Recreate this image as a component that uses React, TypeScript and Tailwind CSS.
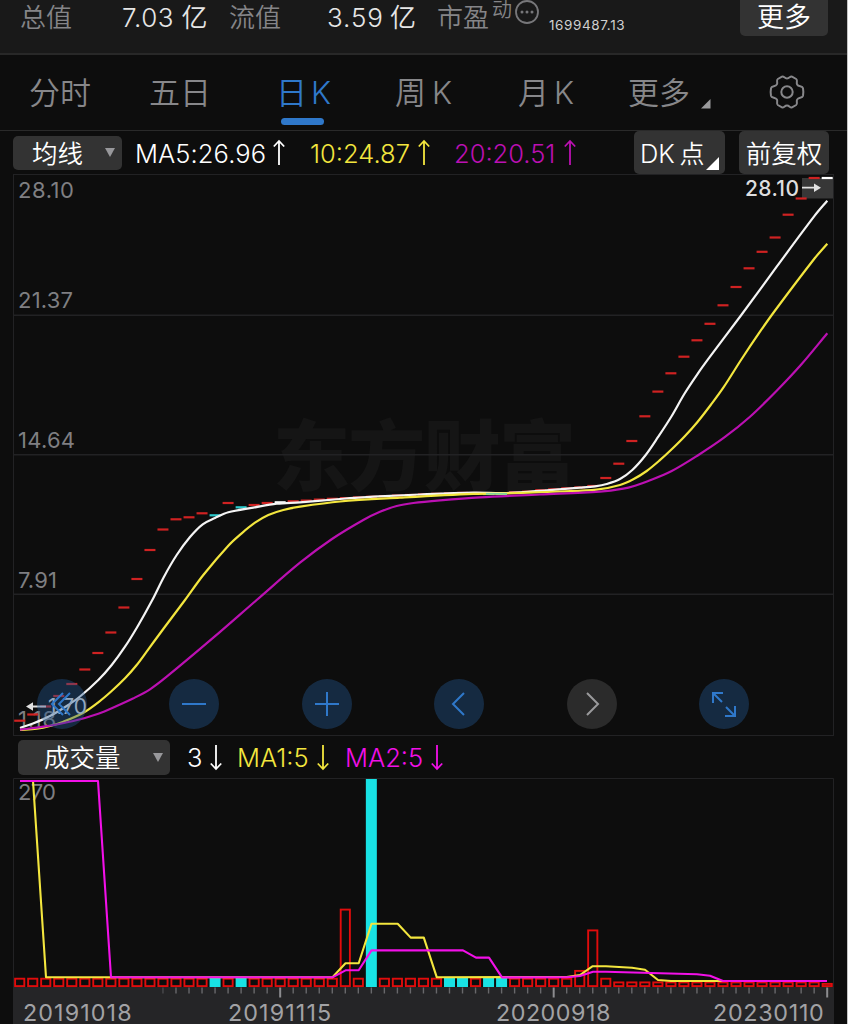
import React from "react";

const STEP = 13.024;
const X0 = 19.7;
const cx = (i: number) => X0 + STEP * i;

const prices: number[] = [
  720.7, 714.5, 706.5, 696, 684, 669.5, 653, 632.5, 607.5, 579, 550, 529.5, 519.3, 517.3, 513.3, 515.3, 503, 507.3,
  505, 503, 502.3, 501.3, 500.6, 499.6, 498.8, 498.1, 497.4, 496.8, 496.2, 495.6, 495, 494.4, 493.8, 493.3, 492.9, 493,
  494, 494, 492.3, 491.6, 490.2, 489.3, 488.3, 487.4, 486, 478, 463.7, 441, 416.3, 391.6, 373.3, 356.7, 340.3, 323.8,
  305.3, 287, 268.3, 251.8, 237.5, 214.7, 198.5, 178, 178,
];
const fallingPrice = [15, 17, 36, 37];
const fallingVolume = [15, 17, 27, 33, 34, 36, 37];

const ma5 =
  "20,728 33,723.5 50,716 66.7,706 80,696.5 98.3,680 111.7,665 125,646.7 138,625.7 152.3,600 164,576.7 176.7,555 190,537 202.7,524.3 215,518 228.3,512.3 253.3,507.7 276.7,503.7 300,502.3 340,499 373.3,496.7 420,494.5 473.3,492.7 506.7,493 546.7,490.3 580,487.7 595,486.3 606.7,484 620,479 632.3,470 645.7,455 658.3,436.7 671.7,416 684.3,394 697.3,374.3 710,356.7 741.3,315 776.7,266.7 814.7,215.7 827.3,200.7";
const ma10 =
  "20,730 36.7,728.7 50,726 63.3,721.7 83.3,712.7 98.3,702.3 111.7,691 125,678.3 136.7,665 148.3,649.3 164,628 185,600 203.3,575 228.3,545.7 241.7,533.3 255,522.7 268.3,515 283.3,510 300,506.7 340,501.5 400,497.7 473.3,493.9 506.7,493.4 560,491.5 596.7,489.7 620,485 633.3,479.3 646.7,471 659.3,460.7 671.7,449.3 685,436 697.7,421.7 710.7,405 723.3,387.7 741,360 759.3,332.7 774.7,311 814.7,258.3 827.3,243.7";
const ma20 =
  "20,729.7 43.3,726.7 73.3,721 98.3,713.7 116.7,706 133,698.5 150,689.3 166.7,676.7 213.3,637.7 256.7,600 300,562.7 332,539 363.3,520 380,511.8 396.7,506 413.3,503 440,500.3 480,497.3 540,494.5 600,491.7 623.3,488.7 635,485.7 648.3,481 671.7,471 697.3,455.7 724,437.7 750,416.7 776.7,390.7 801.7,364 827.3,333.3";

const volMa1 =
  "33,781 46,977.3 332.5,977.3 345.5,963.3 358.7,963.3 371.5,923.7 397.7,923.7 410.7,937.6 423.8,937.6 436.8,977.3 566.6,977 580,975 592.7,966.2 606,966.2 632,967.7 645,969.7 658,980 671,981 827,981";
const volMa2 =
  "20,781 98,781 111,977.3 332.5,977.3 345.5,970.3 358.7,970.3 371.5,950.4 463,950.4 476,957.6 489,957.6 502,977.4 567,977.2 580,976 593,971.7 606,971.7 697,974.2 710,975.7 723,981 827,981";

// Catmull-Rom spline through the points, written as cubic segments.
function smooth(points: string) {
  const p = points.split(" ").map((s) => s.split(",").map(Number));
  let d = `M${p[0][0]} ${p[0][1]}`;
  for (let i = 0; i < p.length - 1; i++) {
    const a = p[Math.max(i - 1, 0)];
    const b = p[i];
    const c = p[i + 1];
    const e = p[Math.min(i + 2, p.length - 1)];
    const w = c[0] - b[0];
    const mb = (c[1] - a[1]) / (c[0] - a[0]);
    const mc = (e[1] - b[1]) / (e[0] - b[0]);
    d += `C${b[0] + w / 3} ${b[1] + (mb * w) / 3} ${c[0] - w / 3} ${c[1] - (mc * w) / 3} ${c[0]} ${c[1]}`;
  }
  return d;
}

function volumeTop(i: number) {
  if (i === 25) return 908.7;
  if (i === 27) return 779;
  if (i === 43) return 970;
  if (i === 44) return 929.5;
  if (i === 62) return 983;
  return i > 45 ? 981.5 : 977.8;
}

function Arrow({ down = false, color, width }: { down?: boolean; color: string; width: string }) {
  return (
    <span className={`${width} shrink-0`}>
      <svg width="14" height="28" viewBox="0 0 14 28" fill="none" stroke={color} strokeWidth="1.8">
        <path d={down ? "M7 1V25M1.8 19.5L7 25L12.2 19.5" : "M7 26V2M1.8 7.5L7 2L12.2 7.5"} />
      </svg>
    </span>
  );
}

function RoundButton({ children, gray = false }: { children: React.ReactNode; gray?: boolean }) {
  return (
    <button
      className={`flex size-[50px] items-center justify-center rounded-full ${
        gray ? "bg-[#2b2b2b] text-[#9a9a9c]" : "bg-[rgba(36,88,146,0.4)] text-[#2f78ca]"
      }`}
    >
      <svg width="50" height="50" viewBox="0 0 50 50" fill="none" stroke="currentColor" strokeWidth="2">
        {children}
      </svg>
    </button>
  );
}

function PriceChart() {
  return (
    <svg className="block" width="821" height="562" viewBox="13 174 821 562" fill="none">
      <rect x="13.5" y="174.5" width="820" height="561" stroke="#222224" />
      <text
        x="273"
        y="485"
        fontSize="77"
        fontWeight="900"
        fill="#151515"
        textLength="303"
        className="font-['Noto_Sans_CJK_SC',sans-serif]"
      >
        东方财富
      </text>
      {[315.3, 454.7, 594.3].map((y) => (
        <path key={y} d={`M14 ${y}H833`} stroke="#222224" strokeWidth="1.6" />
      ))}
      <g fill="#7f7f82" fontSize="22" className="font-[Inter,sans-serif]">
        <text x="18" y="198" textLength="56">28.10</text>
        <text x="18" y="307.5" textLength="55">21.37</text>
        <text x="18" y="447.5" textLength="57">14.64</text>
        <text x="18" y="587.5" textLength="39">7.91</text>
        <text x="18" y="727" textLength="38">1.18</text>
      </g>
      <rect x="802" y="178" width="31" height="20.5" fill="#373737" />
      {prices.map((y, i) => (
        <rect
          key={i}
          x={cx(i) - 5.5}
          y={y - 1.1}
          width="11"
          height="2.2"
          fill={i === 62 || i === 20 ? "#fff" : fallingPrice.includes(i) ? "#2bc9cb" : "#cf2222"}
        />
      ))}
      <g strokeWidth="2.2" strokeLinejoin="round">
        <path d={smooth(ma5)} stroke="#f4f4f4" />
        <path d={smooth(ma10)} stroke="#f3e63e" />
        <path d={smooth(ma20)} stroke="#bb10b2" />
      </g>
      <rect x="486" y="493" width="21" height="1.6" fill="#7fd69a" />
      <g className="font-[Inter,sans-serif]" fill="#dededf" fontSize="21" fontWeight="500">
        <text x="745" y="195.5" textLength="54">28.10</text>
        <text x="48" y="714" textLength="39" fontWeight="400">1.70</text>
      </g>
      <path d="M802 187.7H816M30 706.5H46" stroke="#e0e0e0" strokeWidth="1.8" />
      <path d="M814 183.5L821 187.7L814 191.9ZM33 702.3L26 706.5L33 710.7Z" fill="#e0e0e0" />
    </svg>
  );
}

function VolumeChart() {
  return (
    <svg className="block" width="821" height="220" viewBox="13 778 821 220" fill="none">
      <path d="M13.5 987V778.5H833.5V987" stroke="#222224" />
      <rect x="13" y="987" width="821" height="11" fill="#252527" />
      <text x="18" y="800" fontSize="22" fill="#7f7f82" textLength="38" className="font-[Inter,sans-serif]">
        270
      </text>
      {prices.map((_, i) => {
        const top = volumeTop(i);
        return fallingVolume.includes(i) ? (
          <rect key={i} x={cx(i) - 5.5} y={top} width="11" height={987 - top} fill="#18e2e4" />
        ) : (
          <rect
            key={i}
            x={cx(i) - 4.6}
            y={top + 0.9}
            width="9.2"
            height={987 - top - 1.8}
            stroke="#e00c0c"
            strokeWidth="1.9"
          />
        );
      })}
      {prices.map((_, i) =>
        i < 11 ? null : (
          <path
            key={i}
            d={`M${cx(i)} 987.5V${i === 20 || i === 41 || i === 62 ? 997.5 : 993.5}`}
            stroke={i === 20 || i === 41 || i === 62 ? "#8c8c8f" : i === 11 ? "#4a4a4c" : "#68686b"}
            strokeWidth={i === 20 || i === 41 || i === 62 ? 2 : 1.4}
          />
        ),
      )}
      <g strokeWidth="2.1" strokeLinejoin="round">
        <polyline points={volMa1} stroke="#f3e63e" />
        <polyline points={volMa2} stroke="#f210e8" />
      </g>
    </svg>
  );
}

export default function App() {
  return (
    <div className="flex h-[1024px] w-[848px] flex-col overflow-hidden border-r border-[#c4c4c4] bg-[#0d0d0d] font-[Inter,'Noto_Sans_CJK_SC',sans-serif] whitespace-nowrap">
      <header className="flex h-[55px] shrink-0 items-start border-b-2 border-[#282828] bg-[#191919] pl-5 text-[26px] leading-[36px] text-[#e6e6e6]">
        <span className="w-[102px] font-[350] text-[#858588]">总值</span>
        <span className="w-[59.5px] font-[350] tracking-[0.6px]">7.03</span>
        <span className="w-[47.5px] font-[350]">亿</span>
        <span className="w-[98px] font-[350] text-[#858588]">流值</span>
        <span className="w-[63px] font-[350] tracking-[0.9px]">3.59</span>
        <span className="w-[47px] font-[350]">亿</span>
        <span className="w-[55px] font-[350] text-[#858588]">市盈</span>
        <span className="w-[23px] text-[20px] leading-[20px] font-[350] text-[#858588]">动</span>
        <svg className="shrink-0" width="24" height="25" viewBox="0 0 24 25" fill="#77777a">
          <circle cx="12" cy="12" r="11" fill="none" stroke="#77777a" strokeWidth="1.8" />
          <circle cx="7" cy="12" r="1.5" />
          <circle cx="12" cy="12" r="1.5" />
          <circle cx="17" cy="12" r="1.5" />
        </svg>
        <span className="ml-[10px] w-[191px] pt-[7px] text-[13.5px] tracking-[0.6px] text-[#d0d0d0]">1699487.13</span>
        <button className="h-9 w-[88px] rounded-b-[5px] bg-[#333333] text-[27px] leading-[32px] font-[350] text-white">
          更多
        </button>
      </header>

      <nav className="flex h-[76px] shrink-0 items-start border-b border-[#2a2a2a] pt-[17px] pl-[29px] text-[31px] leading-[42px] font-[350] text-[#87878a]">
        <span className="w-[120px]">分时</span>
        <span className="w-[127px]">五日</span>
        <div className="flex w-[119px] flex-col text-[#2f78ca]">
          <span className="flex gap-[4px]">
            <span className="w-[31px]">日</span>
            <span className="font-light">K</span>
          </span>
          <i className="mt-1 ml-[5px] h-[7px] w-[43px] rounded-full bg-[#2f78ca]" />
        </div>
        <span className="flex w-[123px]">
          <span className="w-[37px]">周</span>
          <span className="font-light">K</span>
        </span>
        <span className="flex w-[110px]">
          <span className="w-[36px]">月</span>
          <span className="font-light">K</span>
        </span>
        <span className="w-[73px]">更多</span>
        <svg className="mt-[27px] mr-[58px] shrink-0" width="10" height="10" viewBox="0 0 10 10">
          <path d="M9.5 0V9.5H0Z" fill="#9a9a9c" />
        </svg>
        <svg
          width="36"
          height="36"
          viewBox="0 0 36 36"
          fill="none"
          stroke="#87878a"
          strokeWidth="2"
          className="mt-[2px] shrink-0"
        >
          <path
            strokeLinejoin="round"
            d="M13 2.6C15 1.8 15.4 4.5 18 4.5S21 1.8 23 2.6L27.2 5C29 6.2 27 8.4 28.1 10.4C29.5 13 33.4 11.5 34 14.3C34.4 16.5 34.4 19.5 34 21.7C33.4 24.5 29.5 23 28.1 25.6C27 27.6 29 29.8 27.2 31L23 33.4C21 34.2 20.6 31.5 18 31.5S15 34.2 13 33.4L8.8 31C7 29.8 9 27.6 7.9 25.6C6.5 23 2.6 24.5 2 21.7C1.6 19.5 1.6 16.5 2 14.3C2.6 11.5 6.5 13 7.9 10.4C9 8.4 7 6.2 8.8 5Z"
          />
          <circle cx="18" cy="18" r="5.7" />
        </svg>
      </nav>

      <div className="flex h-[43px] shrink-0 items-center pl-[13px] text-[25.5px] leading-[34px] font-[350] text-[#bb10b2]">
        <button className="mr-[13px] flex h-[34px] w-[109px] items-center rounded-[5px] bg-[#333333] pl-[19px] text-white">
          <span className="w-[73px] pt-[2px] text-left">均线</span>
          <svg width="10" height="9" viewBox="0 0 10 9">
            <path d="M0 0H10L5 9Z" fill="#98989b" />
          </svg>
        </button>
        <span className="w-[137px] pt-[2px] tracking-[0.1px] text-white">MA5:26.96</span>
        <Arrow color="#ffffff" width="w-[38px]" />
        <span className="w-[107px] pt-[2px] text-[#f3e63e]">10:24.87</span>
        <Arrow color="#f3e63e" width="w-[37px]" />
        <span className="w-[109px] pt-[2px]">20:20.51</span>
        <Arrow color="#bb10b2" width="w-[71px]" />
        <button className="mr-[14px] flex h-[43px] w-[91px] shrink-0 items-center rounded-[5px] bg-[#333333] pl-[6px] text-white">
          <span className="w-[38px] pt-[2px] text-left">DK</span>
          <span className="w-[28px] pt-[2px] text-[25px]">点</span>
          <svg className="mt-[22px] shrink-0" width="13" height="13" viewBox="0 0 13 13">
            <path d="M13 0V13H0Z" fill="#fff" />
          </svg>
        </button>
        <button className="h-[43px] w-[90px] shrink-0 rounded-[5px] bg-[#333333] pt-[2px] text-white">前复权</button>
      </div>

      <section className="relative ml-[13px] h-[562px] w-[821px] shrink-0">
        <PriceChart />
        <div className="absolute top-[504.5px] left-[24px] flex gap-[82.4px]">
          <RoundButton>
            <path d="M26 14L15 25L26 36M33 14L22 25L33 36" />
          </RoundButton>
          <RoundButton>
            <path d="M13 25H37" />
          </RoundButton>
          <RoundButton>
            <path d="M13 25H37M25 13V37" />
          </RoundButton>
          <RoundButton>
            <path d="M30 14L19 25L30 36" />
          </RoundButton>
          <RoundButton gray>
            <path d="M20 14L31 25L20 36" />
          </RoundButton>
          <RoundButton>
            <path d="M14 24V14H24M14 14L23 23M27 28L36 37M26 37H36V27" />
          </RoundButton>
        </div>
      </section>

      <div className="flex h-[42px] shrink-0 items-center pt-[1px] pl-[18px] text-[25.5px] leading-[34px] font-[350] text-[#f210e8]">
        <button className="mr-[17px] flex h-[35px] w-[152px] items-center rounded-[5px] bg-[#333333] pl-[26px] text-white">
          <span className="w-[109px] pt-[1px] text-left">成交量</span>
          <svg width="10" height="9" viewBox="0 0 10 9">
            <path d="M0 0H10L5 9Z" fill="#98989b" />
          </svg>
        </button>
        <span className="w-[22px] pt-[1px] text-white">3</span>
        <Arrow down color="#ffffff" width="w-[28px]" />
        <span className="w-[79px] pt-[1px] text-[#f3e63e]">MA1:5</span>
        <Arrow down color="#f3e63e" width="w-[29px]" />
        <span className="w-[85px] pt-[1px]">MA2:5</span>
        <Arrow down color="#f210e8" width="w-[14px]" />
      </div>

      <section className="ml-[13px] w-[821px] shrink-0">
        <VolumeChart />
        <div className="flex h-[26px] bg-[#252527] pl-[10px] text-[23.3px] leading-[30px] text-[#a2a2a5]">
          <span className="w-[205px] tracking-[1.1px]">20191018</span>
          <span className="w-[268px] tracking-[1.1px]">20191115</span>
          <span className="w-[217px] tracking-[0.5px]">20200918</span>
          <span className="tracking-[0.7px]">20230110</span>
        </div>
      </section>
    </div>
  );
}
